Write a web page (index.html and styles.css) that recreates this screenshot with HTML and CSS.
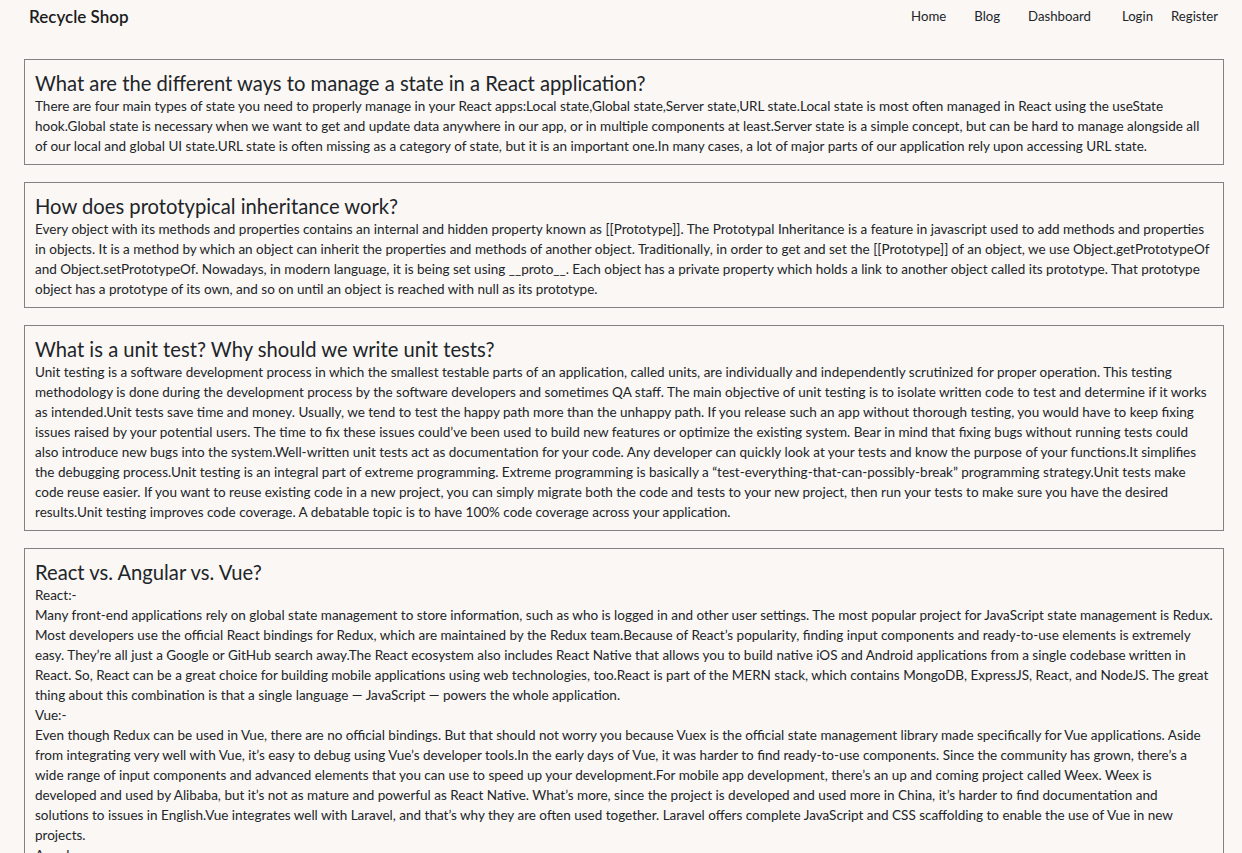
FILE: index.html
```html
<!DOCTYPE html>
<html lang="en">
<head>
<meta charset="utf-8">
<title>Recycle Shop</title>
<link rel="stylesheet" href="styles.css">
</head>
<body>
<header class="navbar">
  <a class="brand" href="#">Recycle Shop</a>
  <nav class="nav">
    <a class="nav-link" href="#">Home</a>
    <a class="nav-link" href="#">Blog</a>
    <a class="nav-link" href="#">Dashboard</a>
    <a class="nav-link login" href="#">Login</a>
    <a class="nav-link register" href="#">Register</a>
  </nav>
</header>
<main class="blog">
  <section class="qa">
    <h2 class="q">What are the different ways to manage a state in a React application?</h2>
    <p class="a">There are four main types of state you need to properly manage in your React apps:Local state,Global state,Server state,URL state.Local state is most often managed in React using the useState hook.Global state is necessary when we want to get and update data anywhere in our app, or in multiple components at least.Server state is a simple concept, but can be hard to manage alongside all of our local and global UI state.URL state is often missing as a category of state, but it is an important one.In many cases, a lot of major parts of our application rely upon accessing URL state.</p>
  </section>
  <section class="qa">
    <h2 class="q">How does prototypical inheritance work?</h2>
    <p class="a">Every object with its methods and properties contains an internal and hidden property known as [[Prototype]]. The Prototypal Inheritance is a feature in javascript used to add methods and properties in objects. It is a method by which an object can inherit the properties and methods of another object. Traditionally, in order to get and set the [[Prototype]] of an object, we use Object.getPrototypeOf and Object.setPrototypeOf. Nowadays, in modern language, it is being set using __proto__. Each object has a private property which holds a link to another object called its prototype. That prototype object has a prototype of its own, and so on until an object is reached with null as its prototype.</p>
  </section>
  <section class="qa">
    <h2 class="q">What is a unit test? Why should we write unit tests?</h2>
    <p class="a">Unit testing is a software development process in which the smallest testable parts of an application, called units, are individually and independently scrutinized for proper operation. This testing methodology is done during the development process by the software developers and sometimes QA staff. The main objective of unit testing is to isolate written code to test and determine if it works as intended.Unit tests save time and money. Usually, we tend to test the happy path more than the unhappy path. If you release such an app without thorough testing, you would have to keep fixing issues raised by your potential users. The time to fix these issues could’ve been used to build new features or optimize the existing system. Bear in mind that fixing bugs without running tests could also introduce new bugs into the system.Well-written unit tests act as documentation for your code. Any developer can quickly look at your tests and know the purpose of your functions.It simplifies the debugging process.Unit testing is an integral part of extreme programming. Extreme programming is basically a “test-everything-that-can-possibly-break” programming strategy.Unit tests make code reuse easier. If you want to reuse existing code in a new project, you can simply migrate both the code and tests to your new project, then run your tests to make sure you have the desired results.Unit testing improves code coverage. A debatable topic is to have 100% code coverage across your application.</p>
  </section>
  <section class="qa">
    <h2 class="q">React vs. Angular vs. Vue?</h2>
    <p class="a">React:-</p>
    <p class="a">Many front-end applications rely on global state management to store information, such as who is logged in and other user settings. The most popular project for JavaScript state management is Redux. Most developers use the official React bindings for Redux, which are maintained by the Redux team.Because of React’s popularity, finding input components and ready-to-use elements is extremely easy. They’re all just a Google or GitHub search away.The React ecosystem also includes React Native that allows you to build native iOS and Android applications from a single codebase written in React. So, React can be a great choice for building mobile applications using web technologies, too.React is part of the MERN stack, which contains MongoDB, ExpressJS, React, and NodeJS. The great thing about this combination is that a single language — JavaScript — powers the whole application.</p>
    <p class="a">Vue:-</p>
    <p class="a">Even though Redux can be used in Vue, there are no official bindings. But that should not worry you because Vuex is the official state management library made specifically for Vue applications. Aside from integrating very well with Vue, it’s easy to debug using Vue’s developer tools.In the early days of Vue, it was harder to find ready-to-use components. Since the community has grown, there’s a wide range of input components and advanced elements that you can use to speed up your development.For mobile app development, there’s an up and coming project called Weex. Weex is developed and used by Alibaba, but it’s not as mature and powerful as React Native. What’s more, since the project is developed and used more in China, it’s harder to find documentation and solutions to issues in English.Vue integrates well with Laravel, and that’s why they are often used together. Laravel offers complete JavaScript and CSS scaffolding to enable the use of Vue in new projects.</p>
    <p class="a">Angular:-</p>
    <p class="a">Angular has a built-in dependency injection system and comes with a full set of tools out of the box. State management in Angular is usually handled with services and RxJS, or with libraries such as NgRx that follow the Redux pattern. Angular is part of the MEAN stack, which contains MongoDB, ExpressJS, Angular, and NodeJS.</p>
  </section>
</main>
</body>
</html>
```

FILE: styles.css
```css
* { box-sizing: border-box; }

html, body {
  margin: 0;
  padding: 0;
  background: #faf7f4;
  color: #212529;
  font-family: Lato, "Open Sans", sans-serif;
}

a { color: inherit; text-decoration: none; }

.navbar {
  display: flex;
  align-items: center;
  justify-content: space-between;
  height: 32px;
  padding: 0 24px 0 29px;
}

.brand {
  font-size: 17px;
  font-weight: 600;
  color: #1c1c1c;
}

.nav {
  display: flex;
  align-items: center;
}

.nav-link {
  font-size: 13.2px;
  margin-left: 28px;
}

.nav-link:first-child { margin-left: 0; }
.nav-link.login { margin-left: 31px; }
.nav-link.register { margin-left: 18px; }

.blog {
  display: flex;
  flex-direction: column;
  gap: 17px;
  width: 1200px;
  margin: 27px 0 0 24px;
}

.qa {
  border: 1px solid #828282;
  padding: 11px 10px 8px;
}

.q {
  margin: 0;
  font-size: 20.2px;
  font-weight: 400;
  line-height: 25px;
}

.a {
  margin: 0;
  font-size: 13.5px;
  line-height: 20px;
}
```
